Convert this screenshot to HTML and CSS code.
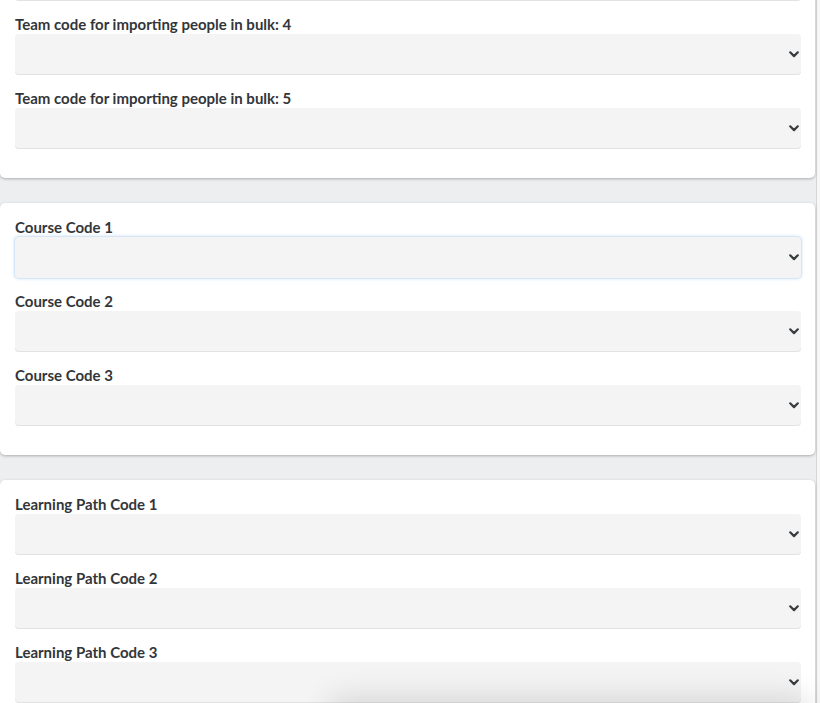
FILE: index.html
```html
<!DOCTYPE html>
<html lang="en">
<head>
<meta charset="utf-8">
<title>Codes</title>
<link rel="stylesheet" href="styles.css">
</head>
<body>
<div class="page">
  <main class="content">
    <section class="card">
      <div class="field">
        <div class="select"><svg class="chev" viewBox="0 0 10 7"><path d="M1.2 1.3 5 5.1 8.8 1.3"/></svg></div>
      </div>
      <div class="field">
        <label class="label">Team code for importing people in bulk: 4</label>
        <div class="select"><svg class="chev" viewBox="0 0 10 7"><path d="M1.2 1.3 5 5.1 8.8 1.3"/></svg></div>
      </div>
      <div class="field">
        <label class="label">Team code for importing people in bulk: 5</label>
        <div class="select"><svg class="chev" viewBox="0 0 10 7"><path d="M1.2 1.3 5 5.1 8.8 1.3"/></svg></div>
      </div>
    </section>
    <section class="card">
      <div class="field">
        <label class="label">Course Code 1</label>
        <div class="select focused"><svg class="chev" viewBox="0 0 10 7"><path d="M1.2 1.3 5 5.1 8.8 1.3"/></svg></div>
      </div>
      <div class="field">
        <label class="label">Course Code 2</label>
        <div class="select"><svg class="chev" viewBox="0 0 10 7"><path d="M1.2 1.3 5 5.1 8.8 1.3"/></svg></div>
      </div>
      <div class="field">
        <label class="label">Course Code 3</label>
        <div class="select"><svg class="chev" viewBox="0 0 10 7"><path d="M1.2 1.3 5 5.1 8.8 1.3"/></svg></div>
      </div>
    </section>
    <section class="card">
      <div class="field">
        <label class="label">Learning Path Code 1</label>
        <div class="select"><svg class="chev" viewBox="0 0 10 7"><path d="M1.2 1.3 5 5.1 8.8 1.3"/></svg></div>
      </div>
      <div class="field">
        <label class="label">Learning Path Code 2</label>
        <div class="select"><svg class="chev" viewBox="0 0 10 7"><path d="M1.2 1.3 5 5.1 8.8 1.3"/></svg></div>
      </div>
      <div class="field">
        <label class="label">Learning Path Code 3</label>
        <div class="select"><svg class="chev" viewBox="0 0 10 7"><path d="M1.2 1.3 5 5.1 8.8 1.3"/></svg></div>
      </div>
    </section>
  </main>
  <div class="rail"></div>
</div>
<div class="floating-shadow"></div>
</body>
</html>
```

FILE: styles.css
```css
html, body {
  margin: 0;
  padding: 0;
  height: 100%;
  overflow: hidden;
}
body {
  background: #f7f7f7;
  font-family: Lato, "Liberation Sans", sans-serif;
  color: #32363a;
}
.page {
  display: flex;
  align-items: flex-start;
  height: 100%;
}
.content {
  width: 816px;
  flex: none;
  background: #edeef0;
  min-height: 100%;
  border-right: 1px solid #d6d6d6;
  display: flex;
  flex-direction: column;
  gap: 25px;
  margin-top: -54px;
  padding-bottom: 40px;
}
.rail {
  flex: 1;
}
.card {
  background: #ffffff;
  border-radius: 5px;
  box-shadow: 0 1px 3px rgba(0, 0, 0, 0.28);
  padding: 14px 14px 16px 15px;
  width: 786px;
}
.field {
  margin-bottom: 13px;
}
.label {
  display: block;
  font-size: 15px;
  font-weight: 700;
  line-height: 20px;
  height: 20px;
  white-space: nowrap;
}
.select {
  height: 41px;
  box-sizing: border-box;
  background: #f4f4f4;
  border-radius: 4px;
  box-shadow: inset 0 -1px 0 #e2e2e2;
  display: flex;
  align-items: center;
  justify-content: flex-end;
  padding-right: 2px;
}
.select.focused {
  box-shadow: 0 0 0 1px #d6e6f7, 0 0 3px 1px rgba(120, 170, 230, 0.35);
}
.chev {
  width: 10px;
  height: 7px;
  fill: none;
  stroke: #3a3d40;
  stroke-width: 2.2;
  stroke-linecap: round;
  stroke-linejoin: round;
}
.floating-shadow {
  position: fixed;
  left: 330px;
  width: 480px;
  bottom: -40px;
  height: 40px;
  border-radius: 8px;
  box-shadow: 0 -6px 30px rgba(0, 0, 0, 0.12);
}
```
